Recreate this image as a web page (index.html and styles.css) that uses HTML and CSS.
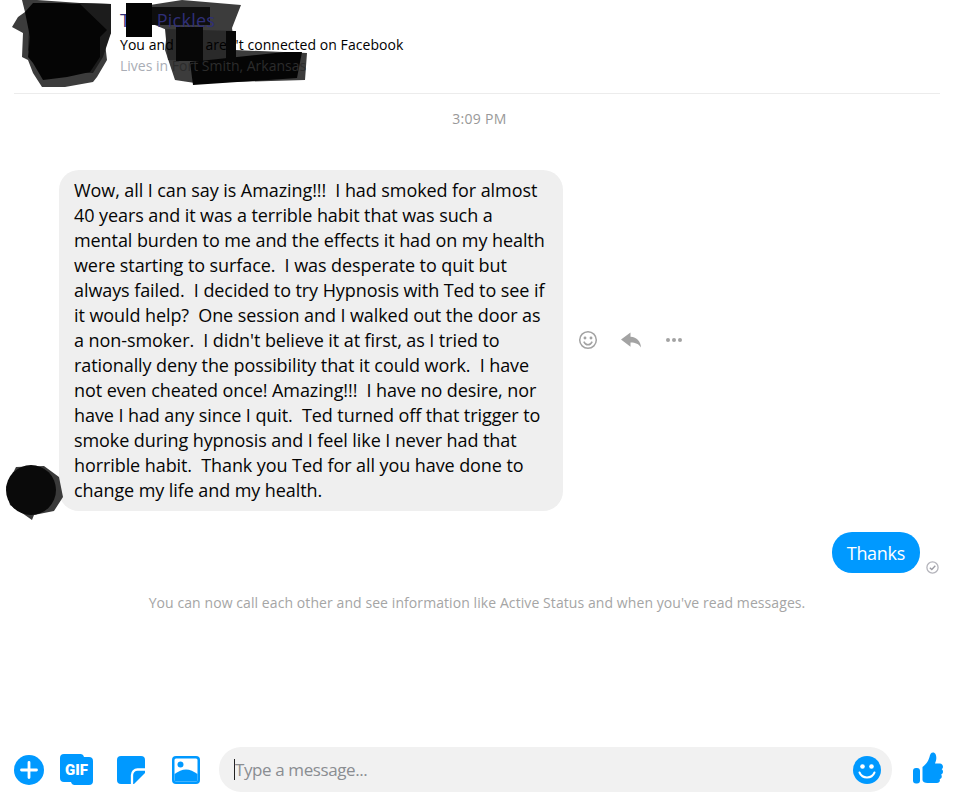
FILE: index.html
```html
<!DOCTYPE html>
<html lang="en">
<head>
  <meta charset="UTF-8">
  <title>Messenger</title>
  <link rel="stylesheet" href="styles.css">
</head>
<body>
  <div class="page">
    <!-- redaction scribbles: one layer under the header text, one over it -->
    <svg class="scribble-under" width="320" height="90" viewBox="0 0 320 90">
      <polygon fill="#3c3c3c" points="22,0 37,0 80,3 111,4 111,33 105,43 107,60 97,77 93,82 65,87 42,87 33,73 28,60 22,57 23,33 12,27 18,17 25,12"/>
      <polygon fill="#1c1c1c" points="30,10 80,3 111,4 111,33 103,57 93,73 40,72 28,50"/>
      <polygon fill="#050505" points="25,12 33,3 60,3 80,4 107,30 100,37 100,57 90,72 67,77 43,80 33,63 28,57 30,37"/>
      <polygon fill="#3c3c3c" points="150,5 182,0 241,5 232,28 235,50 307,53 305,80 195,83 175,80 165,50 167,30 150,23"/>
      <polygon fill="#0e0e0e" points="152,7 210,7 210,25 152,25"/>
      <polygon fill="#2a2a2a" points="165,29 235,31 235,62 168,60"/>
      <polygon fill="#050505" points="190,62 285,52 302,52 297,78 193,85"/>
    </svg>

    <header class="header">
      <div class="header-text">
        <div class="name">Ted Pickles</div>
        <div class="status">You and Ted aren't connected on Facebook</div>
        <div class="lives">Lives in <span class="lives-hidden">Fort Smith, Arkansas</span></div>
      </div>
    </header>

    <svg class="scribble-over" width="320" height="90" viewBox="0 0 320 90">
      <rect x="126" y="3" width="26" height="34" fill="#030303"/>
      <rect x="176" y="27" width="27" height="34" fill="#070707"/>
      <rect x="226" y="31" width="10" height="31" fill="#070707"/>
    </svg>

    <div class="divider"></div>
    <div class="time">3:09 PM</div>

    <main class="thread">
      <div class="row-in">
        <svg class="avatar-blot" width="60" height="58" viewBox="0 0 60 58">
          <polygon points="12,4 40,3 55,14 59,34 50,48 30,52 28,57 18,50 6,42 2,24" fill="#3a3a3a"/>
          <circle cx="27" cy="27" r="25" fill="#0a0a0a"/>
        </svg>
        <div class="bubble-in">Wow, all I can say is Amazing!!!  I had smoked for almost
40 years and it was a terrible habit that was such a
mental burden to me and the effects it had on my health
were starting to surface.  I was desperate to quit but
always failed.  I decided to try Hypnosis with Ted to see if
it would help?  One session and I walked out the door as
a non-smoker.  I didn't believe it at first, as I tried to
rationally deny the possibility that it could work.  I have
not even cheated once! Amazing!!!  I have no desire, nor
have I had any since I quit.  Ted turned off that trigger to
smoke during hypnosis and I feel like I never had that
horrible habit.  Thank you Ted for all you have done to
change my life and my health.</div>
        <div class="msg-actions">
          <svg width="20" height="20" viewBox="0 0 20 20" fill="none" stroke="#a3a3a3" stroke-width="1.5">
            <circle cx="10" cy="10" r="8.3"/>
            <circle cx="7" cy="8" r="0.7" fill="#a3a3a3"/>
            <circle cx="13" cy="8" r="0.7" fill="#a3a3a3"/>
            <path d="M5.8 11.6c1 2.2 2.5 3.2 4.2 3.2s3.200-1 4.200-3.200"/>
          </svg>
          <svg width="22" height="18" viewBox="0 0 22 18">
            <path d="M1 8.500 10.500 1.500v4.300c6.500.4 10 4.400 10.500 10.700-2.300-3.800-5.300-5-10.500-5.100v4.300z" fill="#a3a3a3"/>
          </svg>
          <svg class="more" width="18" height="6" viewBox="0 0 18 6" fill="#a3a3a3">
            <circle cx="3" cy="3" r="2"/>
            <circle cx="9" cy="3" r="2"/>
            <circle cx="15" cy="3" r="2"/>
          </svg>
        </div>
      </div>

      <div class="row-out">
        <div class="bubble-out">Thanks</div>
        <svg class="sent" width="13" height="13" viewBox="0 0 13 13" fill="none" stroke="#b4b4bb" stroke-width="1.300">
          <circle cx="6.500" cy="6.500" r="5.600"/>
          <path d="M3.800 6.700 5.800 8.500 9.300 4.800" stroke="#9a9aa2"/>
        </svg>
      </div>

      <p class="notice">You can now call each other and see information like Active Status and when you've read messages.</p>
    </main>

    <footer class="composer">
      <svg class="tool-plus" width="30" height="30" viewBox="0 0 30 30">
        <circle cx="15" cy="15" r="15" fill="#0099ff"/>
        <path d="M15 7.500v15M7.500 15h15" stroke="#fff" stroke-width="2.800" stroke-linecap="round"/>
      </svg>
      <svg class="tool-gif" width="33" height="31" viewBox="0 0 33 31">
        <path d="M4 0h16a4 4 0 0 1 4 3h5a4 4 0 0 1 4 4v20a4 4 0 0 1-4 4H15a4 4 0 0 1-4-3H4a4 4 0 0 1-4-4V4a4 4 0 0 1 4-4z" fill="#0099ff"/>
        <text x="16.500" y="21" class="gif-label">GIF</text>
      </svg>
      <svg class="tool-sticker" width="28" height="28" viewBox="0 0 28 28">
        <path d="M4 0h20a4 4 0 0 1 4 4v13L17 28H4a4 4 0 0 1-4-4V4a4 4 0 0 1 4-4z" fill="#0099ff"/>
        <path d="M15 28v-9a5.500 5.500 0 0 1 5.500-5.500H28" fill="none" stroke="#fff" stroke-width="2.300"/>
      </svg>
      <svg class="tool-photo" width="28" height="28" viewBox="0 0 28 28">
        <rect width="28" height="28" rx="4" fill="#0099ff"/>
        <rect x="2.500" y="2.500" width="23" height="23" rx="1.500" fill="#fff"/>
        <path d="M2.500 18c4-2.500 7.500-4.500 11.500-4.500S21.500 15.500 25.500 18v7.500h-23z" fill="#0099ff"/>
        <circle cx="8.500" cy="8.500" r="3" fill="#0099ff"/>
      </svg>
      <div class="input-box">
        <span class="caret"></span>
        <span class="placeholder">Type a message...</span>
        <svg class="emoji" width="28" height="28" viewBox="0 0 28 28">
          <circle cx="14" cy="14" r="14" fill="#0099ff"/>
          <circle cx="9.500" cy="10.500" r="2.300" fill="#fff"/>
          <circle cx="18.500" cy="10.500" r="2.300" fill="#fff"/>
          <path d="M6.500 16.500c1.500 3.500 4.200 5 7.500 5s6-1.500 7.500-5" fill="none" stroke="#fff" stroke-width="2" stroke-linecap="round"/>
        </svg>
      </div>
      <svg class="like" width="32" height="32" viewBox="0 0 32 32">
        <rect x="1" y="16" width="7" height="15.500" rx="3" fill="#0099ff"/>
        <path d="M10.500 15c3-2 6-6 7-10 .5-2.500 1.500-4.500 3.500-4.500 2.500 0 3.500 3 3.300 6-.1 2-.8 3.500-1.300 5h5c1.500 0 3 1.500 3 3.200 0 1.200-.6 2-1.300 2.600.9.600 1.300 1.500 1.300 2.500 0 1.300-.8 2.200-1.800 2.700.4.500.6 1.200.6 2 0 1.300-1 2.300-2.200 2.800.2.400.3.800.3 1.200 0 1.500-1.300 2.500-3 2.500H15.500c-2.500 0-5-1-5-3z" fill="#0099ff"/>
      </svg>
    </footer>
  </div>
</body>
</html>
```

FILE: styles.css
```css
* {
  box-sizing: border-box;
  margin: 0;
  padding: 0;
}

body {
  font-family: 'Open Sans', 'Noto Sans', sans-serif;
  background: #fff;
  color: #000;
}

.page {
  position: relative;
  height: 795px;
  overflow: hidden;
  display: flex;
  flex-direction: column;
}

.header {
  position: relative;
  z-index: 1;
  height: 93px;
  padding: 8px 0 0 120px;
}

.name {
  font-size: 18px;
  line-height: 24px;
  letter-spacing: 0.25px;
  color: #2f2f78;
}

.status {
  font-size: 14px;
  line-height: 21px;
  letter-spacing: 0.05px;
  color: #000;
  margin-top: 2px;
}

.lives {
  font-size: 14px;
  line-height: 21px;
  color: #a9adb5;
}

.lives-hidden {
  color: #2c2c2c;
}

.scribble-under {
  position: absolute;
  left: 0;
  top: 0;
}

.scribble-over {
  position: absolute;
  z-index: 2;
  left: 0;
  top: 0;
}

.divider {
  height: 1px;
  margin: 0 17px 0 14px;
  background: #ececec;
}

.time {
  margin-top: 15px;
  padding-left: 2px;
  text-align: center;
  font-size: 14px;
  line-height: 20px;
  letter-spacing: 0.3px;
  color: #999;
}

.thread {
  flex: 1;
  padding-top: 41px;
}

.row-in {
  position: relative;
  display: flex;
  align-items: center;
  padding-left: 59px;
}

.avatar-blot {
  position: absolute;
  left: 4px;
  bottom: -10px;
}

.bubble-in {
  width: 504px;
  padding: 8px 15px;
  background: #efefef;
  border-radius: 20px;
  font-size: 18px;
  line-height: 25px;
  letter-spacing: -0.08px;
  white-space: pre;
  color: #050505;
}

.msg-actions {
  display: flex;
  align-items: center;
  gap: 22px;
  margin: -2px 0 0 15px;
}

.more {
  margin-left: 1px;
}

.row-out {
  display: flex;
  justify-content: flex-end;
  align-items: flex-end;
  margin-top: 21px;
  padding-right: 18px;
}

.bubble-out {
  height: 41px;
  padding: 0 15px;
  background: #0099ff;
  border-radius: 20px;
  font-size: 18px;
  line-height: 43px;
  letter-spacing: -0.3px;
  color: #fff;
}

.sent {
  margin: 0 0 -1px 6px;
}

.notice {
  margin-top: 20px;
  padding-right: 3px;
  text-align: center;
  font-size: 14px;
  line-height: 20px;
  letter-spacing: 0.08px;
  color: #a5a5a5;
}

.composer {
  display: flex;
  align-items: center;
  height: 45px;
  margin-bottom: 3px;
  padding-left: 14px;
}

.tool-gif {
  margin-left: 16px;
}

.tool-sticker {
  margin-left: 24px;
}

.tool-photo {
  margin-left: 27px;
}

.gif-label {
  font-family: 'Roboto', sans-serif;
  font-size: 15px;
  font-weight: 900;
  fill: #fff;
  text-anchor: middle;
}

.input-box {
  display: flex;
  align-items: center;
  width: 673px;
  height: 45px;
  margin-left: 19px;
  padding: 0 11px 0 15px;
  background: #f1f1f1;
  border-radius: 22px;
}

.caret {
  width: 1px;
  height: 21px;
  background: #222;
}

.placeholder {
  flex: 1;
  font-size: 17px;
  letter-spacing: -0.4px;
  color: #8a8d91;
}

.like {
  margin: -3px 0 0 20px;
}
```
